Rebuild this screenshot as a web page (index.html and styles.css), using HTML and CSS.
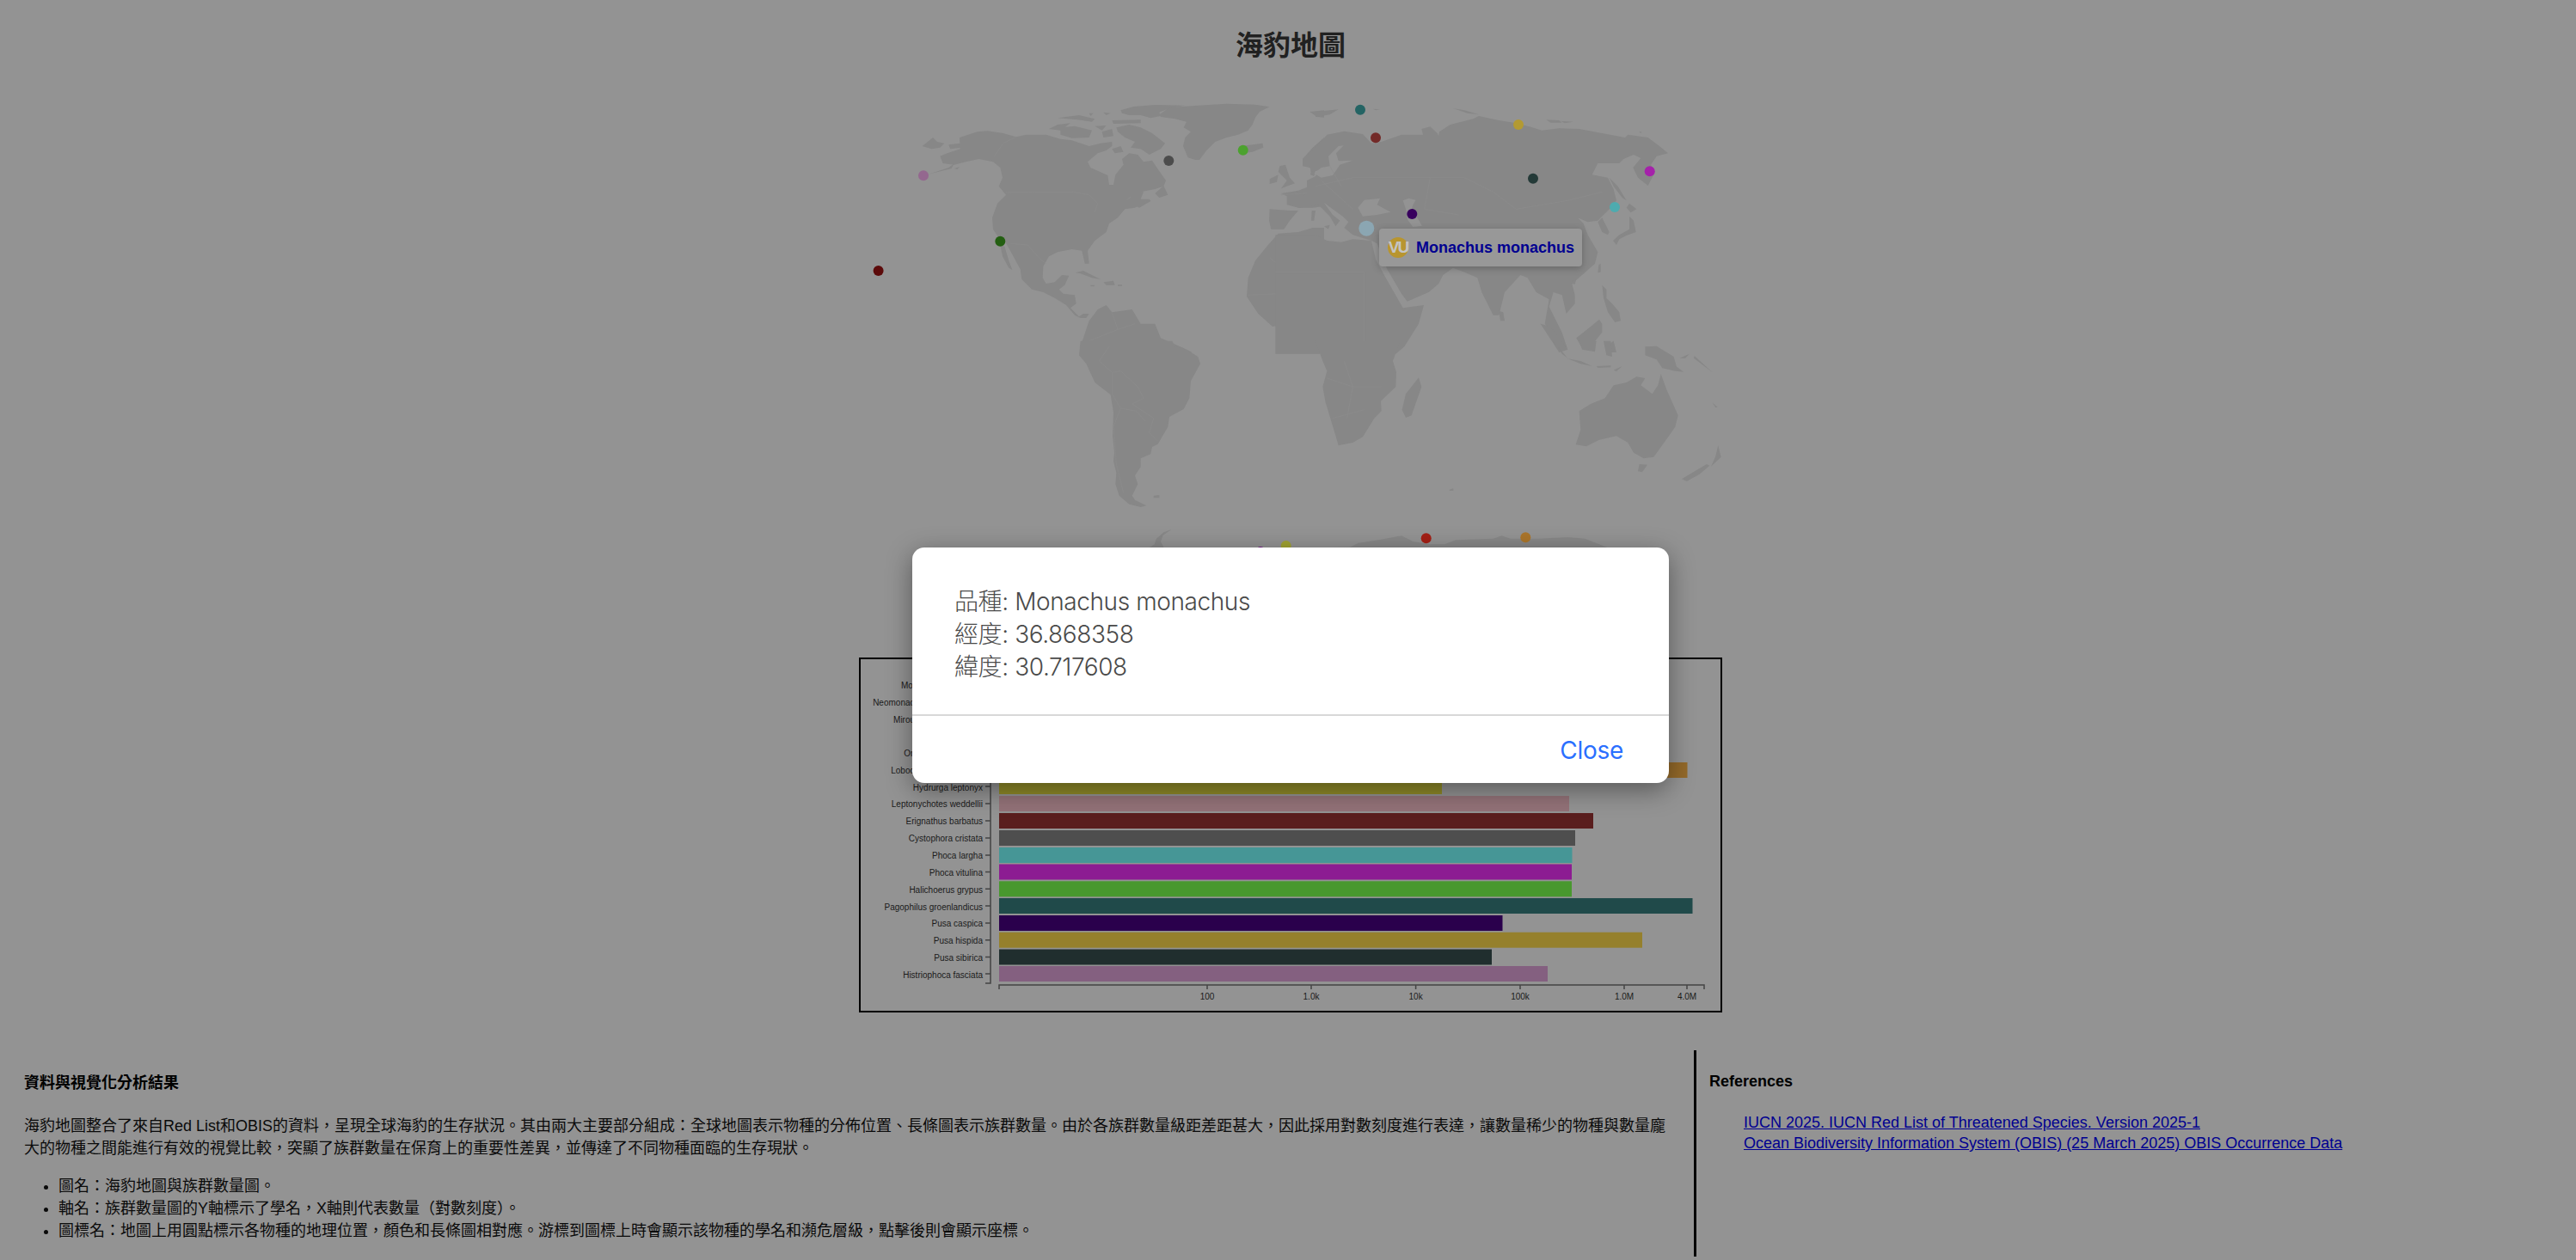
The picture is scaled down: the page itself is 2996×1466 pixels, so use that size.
FILE: index.html
```html
<!DOCTYPE html>
<html lang="zh-Hant">
<head>
<meta charset="utf-8">
<title>海豹地圖</title>
<link rel="stylesheet" href="styles.css">
</head>
<body>
<main class="top">
  <h1 class="title">海豹地圖</h1>
  <div class="map-wrap">
    <svg class="map" viewBox="999 100 1004 665" width="1004" height="665" aria-label="world map">
      <g transform="translate(1060 110) scale(.33333)">
        <path class="land" d="M865,70 L900,45 1000,38 1100,32 1200,35 1250,43 1215,60 1200,80 1190,105 1175,125 1140,140 1100,150 1060,165 1030,195 1005,228 990,228 965,220 948,180 955,150 975,130 950,115 960,95 920,85 870,78 Z"/>
        <path class="land" d="M730,55 L775,42 850,36 955,38 900,48 865,62 870,75 835,82 800,72 760,72 735,65 Z"/>
        <path class="land" d="M520,115 L570,110 630,125 620,150 560,152 520,140 Z M480,120 L510,105 555,100 520,125 Z M510,82 L585,72 640,85 630,95 580,88 Z M620,65 L635,65 625,75 Z M670,62 L695,65 680,72 Z M640,110 L680,108 665,125 Z M665,130 L700,120 705,145 670,150 Z M700,90 L800,88 800,100 705,102 Z M715,115 L760,105 800,115 840,135 885,170 870,190 830,210 800,190 765,185 780,165 745,150 720,130 Z M700,190 L730,180 740,200 710,205 Z M850,345 L880,318 895,350 865,360 Z M1150,180 L1225,170 1228,185 1190,200 1160,205 Z M38,180 L75,150 90,165 115,170 100,185 70,190 Z M130,175 L170,170 175,185 135,190 Z M785,390 L830,365 835,372 795,395 Z"/>
        <path class="land" d="M100,215 L125,205 170,190 168,150 230,130 265,127 320,135 365,148 400,140 470,140 520,155 560,160 620,180 660,170 700,165 700,180 680,195 650,205 615,235 625,255 670,275 685,282 690,315 705,315 712,280 740,245 735,225 760,205 790,210 810,235 840,230 860,260 888,300 880,320 850,330 800,340 760,360 750,370 790,340 810,340 800,365 830,365 780,395 745,400 720,430 690,450 680,480 640,510 615,545 620,590 605,590 595,545 560,540 510,550 480,565 460,600 458,640 470,660 500,655 525,630 550,632 535,665 515,680 530,695 570,700 575,730 555,745 585,775 600,765 620,765 610,780 590,780 570,770 540,735 500,710 460,690 420,680 385,645 380,610 345,545 325,510 305,500 285,470 282,430 300,380 330,350 305,320 318,290 310,255 285,235 235,225 190,235 150,245 110,240 Z"/>
        <path class="land" d="M310,525 L325,530 340,580 352,612 340,605 318,565 Z M60,278 L130,255 150,240 140,258 Z M150,258 L168,252 160,262 Z M572,622 L600,615 630,630 660,645 630,640 590,625 Z M670,655 L705,650 710,665 680,665 Z M625,665 L640,665 638,670 625,669 Z M720,664 L735,664 735,668 720,668 Z"/>
        <path class="land" d="M590,880 L620,790 650,750 680,735 700,760 770,750 800,800 850,800 870,850 950,885 980,900 L590,905 Z"/>
        <path class="land" d="M1285,250 L1305,245 1320,290 1338,310 1290,328 1310,300 1280,270 Z M1250,295 L1280,280 1275,305 1250,312 Z M1250,400 L1320,405 1350,405 1320,440 1300,470 1255,470 1248,440 Z M1290,345 L1350,335 1440,300 1440,390 1400,395 1350,395 1310,385 1310,355 Z M1365,225 L1400,185 1440,150 1440,265 1420,255 1395,255 1380,250 Z M1395,260 L1410,265 1405,285 1392,280 Z M1397,405 L1410,405 1405,440 1395,440 Z M1390,60 L1440,55 1440,80 1415,78 Z"/>
        <path class="land" d="M1440,465 L1400,465 1350,480 1280,485 1240,530 1200,580 1175,640 1170,705 1210,765 1260,810 1320,800 1400,810 1410,860 1440,900 Z"/>
        <path class="border" d="M330,342 L565,340 620,350 650,380 640,410 M365,148 L320,170 290,215 M345,520 L405,525 450,575 470,590 M1250,570 L1360,655 1440,600 M1175,700 L1280,695 1350,640 M700,760 L720,820 780,800 M620,860 L720,820 M1290,350 L1440,340"/>
      </g>
      <g transform="translate(1060 400) scale(.33333)">
        <path class="land" d="M590,-10 L585,40 610,70 640,135 695,178 705,240 702,320 708,380 705,410 715,450 712,490 725,530 760,560 800,570 820,565 780,545 770,530 790,490 780,460 800,430 800,400 835,385 840,360 860,350 895,290 900,255 950,228 970,190 975,130 1008,70 1000,45 960,20 920,10 910,-10 Z"/>
        <path class="land" d="M845,530 L865,528 865,538 845,538 Z M908,648 L880,658 855,680 848,700 830,712 890,730 870,690 878,668 Z"/>
        <path class="border" d="M655,60 L690,10 M655,60 L700,100 730,95 790,150 810,190 770,210 845,260 830,310 860,340 M700,100 L700,175 730,225 785,235 815,270 M730,225 L705,290 715,420 740,520"/>
      </g>
      <g transform="translate(1530 110) scale(.33333)">
        <path class="land" d="M-45,225 L0,185 40,140 100,128 165,138 195,170 230,165 300,140 375,140 370,120 400,112 425,135 440,168 425,170 432,130 470,105 550,85 570,75 640,90 700,100 740,110 790,125 850,118 920,120 1000,135 1080,150 1090,140 1160,150 1200,180 1230,205 1190,215 1170,245 1185,270 1160,318 1125,290 1108,255 1135,222 1110,210 1075,225 1060,240 985,240 965,280 1020,290 1040,330 1050,370 1030,395 1005,420 985,440 950,445 915,430 935,450 950,490 985,550 975,590 930,630 895,660 905,700 905,730 875,765 860,700 830,690 815,740 860,830 880,890 850,860 800,800 815,715 770,690 740,640 715,630 660,690 640,770 620,770 580,690 565,640 520,620 480,605 445,630 430,660 395,690 320,722 300,695 250,610 215,520 195,510 130,490 100,465 115,445 95,425 30,378 60,420 85,440 70,460 50,425 10,385 -60,395 -60,360 -30,345 -30,300 0,285 10,265 -15,270 -20,255 -45,250 Z"/>
        <path class="land" d="M-140,490 L0,490 40,510 90,515 130,505 195,510 210,575 245,640 305,745 378,735 360,800 310,880 280,905 -140,905 Z"/>
        <path class="land" d="M985,445 L1000,430 1025,480 1020,490 1000,480 Z M1095,425 L1110,440 1118,480 1085,492 1060,505 1050,525 1038,510 1060,490 1095,470 Z M1085,395 L1095,380 1120,400 1100,412 Z M1025,290 L1055,320 1085,370 1070,360 1040,320 Z M988,595 L995,590 995,620 985,622 Z M895,650 L910,645 905,662 890,660 Z M640,755 L655,760 660,790 645,790 Z M1000,665 L1015,680 1015,710 1035,730 1060,760 1065,790 1045,795 1020,760 1005,710 Z M910,850 L960,810 990,785 1000,800 1000,830 960,880 930,885 Z M785,800 L820,810 880,890 850,900 Z M1010,880 L1040,860 1050,900 1020,900 Z M805,88 L850,90 860,98 820,98 Z M855,92 L900,95 870,100 Z M480,48 L520,55 570,70 530,65 Z M0,60 L80,52 50,70 0,78 Z M200,50 L225,52 210,55 Z M1130,128 L1140,132 1132,134 Z M30,460 L50,455 45,470 Z"/>
        <path class="water" d="M305,370 L325,362 350,368 340,385 335,402 352,425 372,458 340,462 322,438 315,400 Z M148,395 L170,368 225,362 215,385 262,410 215,420 165,425 Z M-5,275 L20,255 50,250 45,215 80,180 98,178 72,205 80,232 130,230 85,245 60,282 20,290 Z"/>
        <path class="border" d="M0,320 L130,290 400,290 520,290 620,340 700,400 880,370 1000,340 M400,290 L380,400 500,420 M170,620 L170,905 M-140,620 L170,620 M50,250 L90,320 M20,300 L130,400"/>
      </g>
      <g transform="translate(1530 400) scale(.33333)">
        <path class="land" d="M0,-10 L25,60 40,95 25,150 35,205 70,320 80,355 130,345 165,325 205,260 230,235 228,200 280,150 282,100 270,60 295,-10 Z"/>
        <path class="land" d="M360,118 L370,150 335,250 315,258 302,230 315,175 Z"/>
        <path class="land" d="M920,235 L960,210 1010,190 1040,145 1085,135 1120,115 1150,120 1135,145 1175,175 1195,145 1205,105 1225,160 1265,250 1255,290 1220,340 1180,395 1145,400 1110,380 1090,345 1050,322 990,335 945,358 908,352 925,300 Z"/>
        <path class="land" d="M1130,420 L1158,422 1140,448 1125,445 Z M1278,472 L1365,420 1375,425 1340,455 1295,480 Z M1405,355 L1415,395 1380,428 1395,395 Z M1150,10 L1190,8 1250,45 1260,80 1285,98 1255,95 1210,85 1190,55 1150,40 Z M880,52 L925,60 965,78 925,70 Z M830,-10 L880,50 860,35 Z M920,-10 L980,-10 975,28 930,20 Z M1005,-10 L1030,-10 1035,45 1015,40 Z M980,78 L1030,76 1030,82 985,84 Z M1040,92 L1070,78 1050,96 Z M1270,50 L1305,35 1290,50 Z M1322,42 L1385,100 1320,50 Z M1385,205 L1403,222 1395,222 Z M465,510 L480,505 482,512 470,513 Z"/>
        <path class="land" d="M-140,760 L-140,712 0,712 120,710 150,695 220,685 300,670 340,690 400,700 450,700 490,685 620,680 650,670 680,680 780,680 880,675 940,680 1020,712 1020,760 Z"/>
        <path class="border" d="M40,120 L130,150 230,150 M60,260 L170,230 M100,60 L130,150 110,260"/>
      </g>
      <circle class="d01" cx="1074" cy="204.3" r="6"/>
      <circle class="d02" cx="1163.3" cy="280.7" r="6"/>
      <circle class="d03" cx="1359.3" cy="187" r="6"/>
      <circle class="d04" cx="1445.7" cy="174.7" r="6"/>
      <circle class="d05" cx="1582" cy="127.7" r="6"/>
      <circle class="d06" cx="1600" cy="160.3" r="6"/>
      <circle class="d07" cx="1766" cy="145" r="6"/>
      <circle class="d08" cx="1783" cy="207.7" r="6"/>
      <circle class="d09" cx="1918.7" cy="199.3" r="6"/>
      <circle class="d10" cx="1878" cy="241" r="6"/>
      <circle class="d11" cx="1642.3" cy="249" r="6"/>
      <circle class="d12" cx="1589.3" cy="265.7" r="9"/>
      <circle class="d13" cx="1021.6" cy="315" r="6"/>
      <circle class="d14" cx="1658.7" cy="626.3" r="6"/>
      <circle class="d15" cx="1774.3" cy="625.3" r="6"/>
      <circle class="d16" cx="1495.7" cy="635" r="6"/>
      <circle class="d17" cx="1466" cy="642" r="6"/>
    </svg>
    <div class="tooltip">
      <span class="badge">VU</span>
      <span class="tip-name">Monachus monachus</span>
    </div>
  </div>
  <div class="chart">
    <svg class="chart-svg" viewBox="1001 767 1000 409" width="1000" height="409">
      <rect class="d12" x="1162" y="786.6" width="700" height="18"/>
      <rect class="d17" x="1162" y="806.4" width="360" height="18"/>
      <rect class="d13" x="1162" y="826.3" width="640" height="18"/>
      <rect class="d02" x="1162" y="846.1" width="660" height="18"/>
      <rect class="d14" x="1162" y="866" width="620" height="18"/>
      <rect class="b-lobodon" x="1162" y="887" width="800.5" height="18"/>
      <rect class="b-hydrurga" x="1162" y="906" width="515" height="18"/>
      <rect class="b-lepto" x="1162" y="926" width="663" height="18"/>
      <rect class="b-erig" x="1162" y="946" width="691" height="18"/>
      <rect class="b-cysto" x="1162" y="966" width="670" height="18"/>
      <rect class="b-largha" x="1162" y="986" width="666.5" height="18"/>
      <rect class="b-vitulina" x="1162" y="1005.5" width="666" height="18"/>
      <rect class="b-halich" x="1162" y="1025.3" width="666" height="18"/>
      <rect class="b-pago" x="1162" y="1045" width="806.5" height="18"/>
      <rect class="b-caspica" x="1162" y="1065" width="585.5" height="18"/>
      <rect class="b-hispida" x="1162" y="1084.7" width="748" height="18"/>
      <rect class="b-sibirica" x="1162" y="1104.5" width="573" height="18"/>
      <rect class="b-histrio" x="1162" y="1124" width="638" height="18"/>
      <path class="axis" d="M1146,784.5 H1152 V1144 H1146 M1162,1151 V1146 H1982 V1151 M1404,1146 V1151 M1525,1146 V1151 M1646.6,1146 V1151 M1768,1146 V1151 M1889,1146 V1151 M1962,1146 V1151 M1146,796 H1152 M1146,816 H1152 M1146,836 H1152 M1146,856 H1152 M1146,876 H1152 M1146,895 H1152 M1146,915 H1152 M1146,935 H1152 M1146,955 H1152 M1146,975 H1152 M1146,995 H1152 M1146,1014.5 H1152 M1146,1034.3 H1152 M1146,1054 H1152 M1146,1074 H1152 M1146,1093.7 H1152 M1146,1113.5 H1152 M1146,1133 H1152"/>
      <g class="ylabels">
        <text x="1143" y="800.5">Monachus monachus</text>
        <text x="1143" y="820.5">Neomonachus schauinslandi</text>
        <text x="1143" y="840.5">Mirounga angustirostris</text>
        <text x="1143" y="860.5">Mirounga leonina</text>
        <text x="1143" y="880">Ommatophoca rossii</text>
        <text x="1143" y="899.5">Lobodon carcinophagus</text>
        <text x="1143" y="919.5">Hydrurga leptonyx</text>
        <text x="1143" y="939">Leptonychotes weddellii</text>
        <text x="1143" y="959">Erignathus barbatus</text>
        <text x="1143" y="979">Cystophora cristata</text>
        <text x="1143" y="998.5">Phoca largha</text>
        <text x="1143" y="1018.5">Phoca vitulina</text>
        <text x="1143" y="1038.5">Halichoerus grypus</text>
        <text x="1143" y="1058.5">Pagophilus groenlandicus</text>
        <text x="1143" y="1077.5">Pusa caspica</text>
        <text x="1143" y="1097.5">Pusa hispida</text>
        <text x="1143" y="1117.5">Pusa sibirica</text>
        <text x="1143" y="1137.5">Histriophoca fasciata</text>
      </g>
      <g class="xlabels">
        <text x="1404" y="1163">100</text>
        <text x="1525" y="1163">1.0k</text>
        <text x="1646.6" y="1163">10k</text>
        <text x="1768" y="1163">100k</text>
        <text x="1889" y="1163">1.0M</text>
        <text x="1962" y="1163">4.0M</text>
      </g>
    </svg>
  </div>
</main>
<section class="bottom">
  <div class="analysis">
    <h2 class="heading">資料與視覺化分析結果</h2>
    <p class="para">海豹地圖整合了來自Red List和OBIS的資料，呈現全球海豹的生存狀況。其由兩大主要部分組成：全球地圖表示物種的分佈位置、長條圖表示族群數量。由於各族群數量級距差距甚大，因此採用對數刻度進行表達，讓數量稀少的物種與數量龐<br>大的物種之間能進行有效的視覺比較，突顯了族群數量在保育上的重要性差異，並傳達了不同物種面臨的生存現狀。</p>
    <ul class="notes">
      <li>圖名：海豹地圖與族群數量圖。</li>
      <li>軸名：族群數量圖的Y軸標示了學名，X軸則代表數量（對數刻度）。</li>
      <li>圖標名：地圖上用圓點標示各物種的地理位置，顏色和長條圖相對應。游標到圖標上時會顯示該物種的學名和瀕危層級，點擊後則會顯示座標。</li>
    </ul>
  </div>
  <aside class="refs">
    <h2 class="refs-title">References</h2>
    <div class="ref-links">
      <a href="#">IUCN 2025. IUCN Red List of Threatened Species. Version 2025-1</a>
      <a href="#">Ocean Biodiversity Information System (OBIS) (25 March 2025) OBIS Occurrence Data</a>
    </div>
  </aside>
</section>
<div class="modal" role="dialog">
  <div class="modal-body">
    <div>品種: Monachus monachus</div>
    <div>經度: 36.868358</div>
    <div>緯度: 30.717608</div>
  </div>
  <div class="modal-foot">
    <button class="close-btn" type="button">Close</button>
  </div>
</div>
</body>
</html>
```

FILE: styles.css
```css
* { box-sizing: border-box; }
html, body { margin: 0; padding: 0; }
body {
  position: relative;
  width: 2996px;
  height: 1466px;
  overflow: hidden;
  background: #939393;
  color: #0a0a0a;
  font-family: "Liberation Sans", "Noto Sans CJK TC", sans-serif;
}
.top {
  display: flex;
  flex-direction: column;
  align-items: center;
  margin-left: 6px;
}
.title {
  margin: 0;
  height: 100px;
  font-size: 32px;
  line-height: 107px;
  font-weight: 700;
  color: #212121;
}
.map-wrap { position: relative; width: 1004px; height: 665px; }
.map { display: block; }
.land { fill: #878787; }
.water { fill: #939393; }
.border { fill: none; stroke: #8d8d8d; stroke-width: 2; }
.d01 { fill: #94688f; }
.d02 { fill: #245f12; }
.d03 { fill: #4c4c4c; }
.d04 { fill: #4ca22f; }
.d05 { fill: #246464; }
.d06 { fill: #732a28; }
.d07 { fill: #b39a32; }
.d08 { fill: #243a38; }
.d09 { fill: #a522aa; }
.d10 { fill: #4eabaf; }
.d11 { fill: #38005e; }
.d12 { fill: #8ba6b2; }
.d13 { fill: #5c0a0a; }
.d14 { fill: #a31f15; }
.d15 { fill: #ab752a; }
.d16 { fill: #a1a332; }
.d17 { fill: #6c1080; }
.tooltip {
  position: absolute;
  left: 605px;
  top: 166px;
  width: 236px;
  height: 44px;
  display: flex;
  align-items: center;
  gap: 9px;
  padding-left: 10px;
  background: #989898;
  border-radius: 4px;
  box-shadow: 0 2px 8px rgba(0, 0, 0, 0.25);
}
.badge {
  flex: none;
  width: 24px;
  height: 24px;
  border-radius: 50%;
  background: #b8952f;
  color: #c4c4c4;
  font-size: 19px;
  font-weight: 700;
  line-height: 24px;
  text-align: center;
  letter-spacing: -2px;
  white-space: nowrap;
}
.tip-name { font-size: 18px; font-weight: 700; color: #000090; white-space: nowrap; }
.chart {
  width: 1004px;
  height: 413px;
  border: 2px solid #000;
}
.chart-svg { display: block; }
.b-lobodon { fill: #93692a; }
.b-hydrurga { fill: #8f8a28; }
.b-lepto { fill: #937278; }
.b-erig { fill: #5a1e1e; }
.b-cysto { fill: #4e4e4e; }
.b-largha { fill: #469696; }
.b-vitulina { fill: #8c1c92; }
.b-halich { fill: #48982e; }
.b-pago { fill: #204a4a; }
.b-caspica { fill: #2a004c; }
.b-hispida { fill: #95802c; }
.b-sibirica { fill: #202e2e; }
.b-histrio { fill: #846080; }
.axis { fill: none; stroke: #444; stroke-width: 1.5; }
.ylabels text, .xlabels text {
  font-family: "Liberation Sans", sans-serif;
  font-size: 10px;
  fill: #1a1a1a;
}
.ylabels text { text-anchor: end; }
.xlabels text { text-anchor: middle; }
.bottom {
  display: flex;
  height: 240px;
  margin-top: 44px;
}
.analysis {
  width: 1970px;
  padding: 25px 0 0 28px;
  font-size: 18px;
  line-height: 26px;
}
.heading { margin: 0 0 24px; font-size: 18px; line-height: 26px; font-weight: 700; color: #000; }
.para { margin: 0 0 18px; white-space: nowrap; }
.notes { margin: 0; padding-left: 40px; line-height: 26px; }
.refs {
  flex: 1;
  border-left: 3px solid #000;
  padding: 24px 0 0 15px;
}
.refs-title { margin: 0 0 24px; font-size: 18px; line-height: 24px; font-weight: 700; color: #000; }
.ref-links { display: flex; flex-direction: column; align-items: flex-start; margin-left: 40px; }
.ref-links a { font-size: 18px; line-height: 24px; color: #000090; text-decoration: underline; }
.modal {
  position: absolute;
  left: 1061px;
  top: 637px;
  width: 880px;
  height: 274px;
  background: #fff;
  border-radius: 14px;
  box-shadow: 0 8px 30px rgba(0, 0, 0, 0.4);
  display: flex;
  flex-direction: column;
}
.modal-body {
  height: 196px;
  padding: 44px 49px 0;
  border-bottom: 2px solid #d8d8d8;
  font-family: Inter, "Noto Sans CJK TC", sans-serif;
  font-weight: 300;
  font-size: 28px;
  letter-spacing: -0.4px;
  line-height: 38px;
  color: #4a4a4a;
}
.modal-foot {
  flex: 1;
  display: flex;
  align-items: center;
  justify-content: flex-end;
  padding: 2px 53px 0 0;
}
.close-btn {
  border: 0;
  padding: 0;
  background: none;
  font-family: Inter, sans-serif;
  font-size: 28px;
  letter-spacing: -0.3px;
  line-height: 38px;
  color: #2a6fff;
}
```
